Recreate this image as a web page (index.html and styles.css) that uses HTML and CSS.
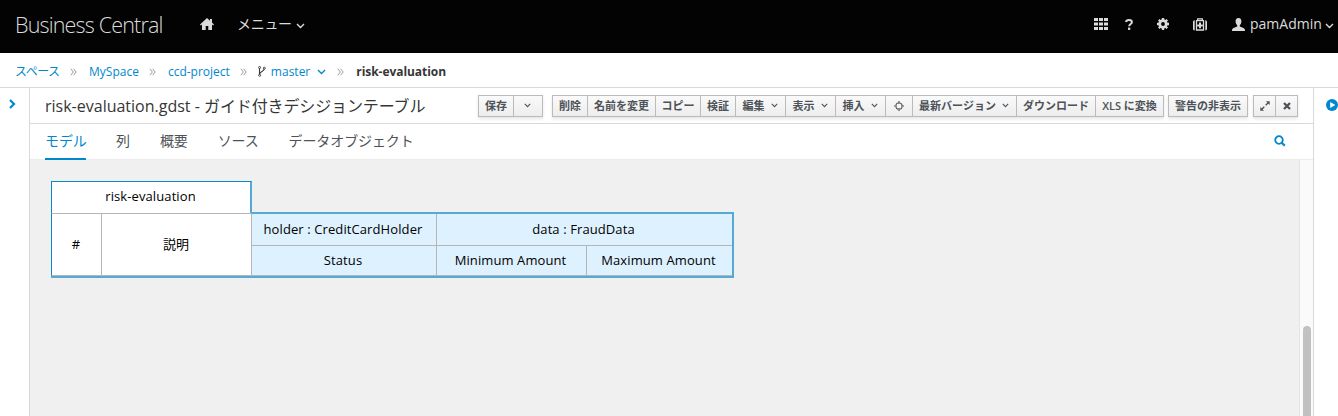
FILE: index.html
```html
<!DOCTYPE html>
<html lang="ja">
<head>
<meta charset="utf-8">
<title>Business Central</title>
<link rel="stylesheet" href="styles.css">
</head>
<body>
<svg class="defs" width="0" height="0">
  <symbol id="chev" viewBox="0 0 9 6"><path d="M1 1l3.500 3.500L8 1" fill="none" stroke="currentColor" stroke-width="1.400"/></symbol>
  <symbol id="sep" viewBox="0 0 7 8"><path d="M.8.8L3.400 4 .8 7.200M3.600.8L6.200 4 3.600 7.200" fill="none" stroke="currentColor" stroke-width=".9"/></symbol>
</svg>
<header class="navbar">
  <div class="brand">Business Central</div>
  <svg class="home" viewBox="0 0 14 12"><path d="M7 0L0 6.400l.9 1L2 6.500V12h3.700V8h2.600v4H12V6.500l1.100.9.900-1-2-1.800V1h-2v1.700z" fill="currentColor"/></svg>
  <div class="menu"><span>メニュー</span><svg class="nav-chev"><use href="#chev"/></svg></div>
  <div class="tools">
    <svg class="apps" viewBox="0 0 14 12"><path d="M0 0h4v3H0zM5 0h4v3H5zM10 0h4v3h-4zM0 4.500h4v3H0zM5 4.500h4v3H5zM10 4.500h4v3h-4zM0 9h4v3H0zM5 9h4v3H5zM10 9h4v3h-4z" fill="currentColor"/></svg>
    <svg class="help" viewBox="0 0 8 11"><path d="M1 3C1.200 1.700 2.300 1 4 1s2.900.8 2.900 2.200C6.900 5 4.200 5 4.200 7.200" fill="none" stroke="currentColor" stroke-width="2"/><path d="M3 8.600h2.300v2.300H3z" fill="currentColor"/></svg>
    <svg class="gear" viewBox="0 0 12 12"><circle cx="6" cy="6" r="3.300" fill="none" stroke="currentColor" stroke-width="2.800"/><path d="M6 0v2.500M6 9.500V12M0 6h2.500M9.500 6H12M1.800 1.800l1.700 1.700M8.500 8.500l1.700 1.700M10.200 1.800L8.500 3.500M3.500 8.500l-1.700 1.700" stroke="currentColor" stroke-width="2.300"/></svg>
    <svg class="kit" viewBox="0 0 14 13"><path d="M4.700 2.500V.8h4.600v1.700M3.500 2.700h7v9.300h-7z" fill="none" stroke="currentColor" stroke-width="1.300"/><path d="M1.700 2.300C.5 2.300 0 3 0 4v6.700c0 1 .5 1.700 1.700 1.700zM12.300 2.300C13.500 2.300 14 3 14 4v6.700c0 1-.5 1.700-1.700 1.700z" fill="currentColor"/><path d="M7 4.500v5.800M4.200 7.400h5.600" stroke="currentColor" stroke-width="2"/></svg>
    <svg class="user" viewBox="0 0 13 13"><path d="M6.500 0C4.500 0 3.500 1.400 3.600 3.500c.1 1.700.7 3 1.600 3.800v1.200L1.500 10C.4 10.500 0 11.300 0 13h13c0-1.700-.4-2.500-1.500-3L7.800 8.500V7.300c.9-.8 1.500-2.100 1.600-3.800C9.500 1.400 8.500 0 6.500 0z" fill="currentColor"/></svg>
    <span class="username">pamAdmin</span><svg class="nav-chev"><use href="#chev"/></svg>
  </div>
</header>
<nav class="crumbs">
  <a>スペース</a><svg class="sep"><use href="#sep"/></svg>
  <a>MySpace</a><svg class="sep"><use href="#sep"/></svg>
  <a>ccd-project</a><svg class="sep"><use href="#sep"/></svg>
  <svg class="branch" viewBox="0 0 8 11"><path d="M1.500 2v7M6.400 2.500C6.400 5.800 1.700 5 1.700 8" fill="none" stroke="#363636" stroke-width="1.100"/><g fill="#fff" stroke="#363636" stroke-width=".9"><circle cx="1.600" cy="1.500" r="1"/><circle cx="1.600" cy="9.300" r="1"/><circle cx="6.300" cy="2.200" r="1"/></g></svg>
  <a>master</a><svg class="crumb-chev"><use href="#chev"/></svg><svg class="sep"><use href="#sep"/></svg>
  <strong>risk-evaluation</strong>
</nav>
<div class="workbench">
  <aside class="west"><svg viewBox="0 0 7 10"><path d="M1 1l4 4-4 4" fill="none" stroke="currentColor" stroke-width="2.200"/></svg></aside>
  <main class="editor">
    <div class="titlebar">
      <h1><span class="file">risk-evaluation.gdst - </span><span class="kind">ガイド付きデシジョンテーブル</span></h1>
      <div class="group save"><button>保存</button><button><svg class="chev"><use href="#chev"/></svg></button></div>
      <div class="group actions">
        <button>削除</button><button>名前を変更</button><button>コピー</button><button>検証</button>
        <button>編集<svg class="chev"><use href="#chev"/></svg></button>
        <button>表示<svg class="chev"><use href="#chev"/></svg></button>
        <button>挿入<svg class="chev"><use href="#chev"/></svg></button>
        <button><svg class="target" viewBox="0 0 10 10"><circle cx="5" cy="5" r="3.300" fill="none" stroke="currentColor" stroke-width="1.100" stroke-dasharray="3.600 1.580" stroke-dashoffset="-.8"/><path d="M5 0v3M5 7v3M0 5h3M7 5h3" stroke="currentColor" stroke-width="1.200"/></svg></button>
        <button>最新バージョン<svg class="chev"><use href="#chev"/></svg></button>
        <button>ダウンロード</button><button>XLS に変換</button>
      </div>
      <div class="group alerts"><button>警告の非表示</button></div>
      <div class="group window">
        <button><svg class="expand" viewBox="0 0 10 10"><path d="M5.700 4.300L8.500 1.500M4.300 5.700L1.500 8.500" stroke="currentColor" stroke-width="1.400"/><path d="M6 .3h3.700V4zM.3 6v3.700H4z" fill="currentColor"/></svg></button>
        <button><svg class="close" viewBox="0 0 8 8"><path d="M1 1l6 6M7 1L1 7" stroke="currentColor" stroke-width="2.300"/></svg></button>
      </div>
    </div>
    <div class="tabs">
      <a class="active">モデル</a><a>列</a><a>概要</a><a>ソース</a><a>データオブジェクト</a>
      <svg class="search" viewBox="0 0 12 12"><circle cx="5" cy="5" r="3.800" fill="none" stroke="currentColor" stroke-width="1.800"/><path d="M7.800 7.800l3 3" stroke="currentColor" stroke-width="2.200"/></svg>
    </div>
    <div class="canvas">
      <div class="grid-area">
        <div class="caption">risk-evaluation</div>
        <div class="decision">
          <div class="plain">#</div>
          <div class="plain desc">説明</div>
          <div class="conditions">
            <div>holder : CreditCardHolder</div><div class="wide">data : FraudData</div>
            <div>Status</div><div>Minimum Amount</div><div>Maximum Amount</div>
          </div>
        </div>
      </div>
      <div class="track"><div class="thumb"></div></div>
    </div>
  </main>
  <aside class="east"><svg viewBox="0 0 12 12"><circle cx="6" cy="6" r="6" fill="currentColor"/><path d="M4.200 2.900v6.200L9.300 6z" fill="#fff"/></svg></aside>
</div>
</body>
</html>
```
FILE: styles.css
```css
* { box-sizing: border-box; }
body { margin: 0; width: 1338px; height: 416px; overflow: hidden; background: #fff; color: #363636; font-family: "Open Sans", "Noto Sans CJK JP", sans-serif; font-size: 12px; }
svg { display: block; flex: none; }
.defs { position: absolute; }

.navbar { display: flex; align-items: center; height: 53px; padding-left: 15px; padding-bottom: 5px; background: #030303; color: #dbdbdb; white-space: nowrap; }
.brand { width: 148px; font-size: 21.500px; font-weight: 300; letter-spacing: -.83px; padding-top: 1px; }
.home { width: 14px; height: 12px; margin-left: 37px; }
.menu { display: flex; align-items: center; gap: 4px; margin-left: 23px; font-size: 14px; }
.menu span { width: 55px; margin-top: -2px; letter-spacing: -.3px; }
.nav-chev { width: 9px; height: 6px; margin-top: 3px; }
.tools { display: flex; align-items: center; margin-left: auto; padding-right: 4px; }
.apps { width: 14px; height: 12px; }
.help { width: 8px; height: 11px; margin-left: 17px; }
.gear { width: 12px; height: 12px; margin-left: 24px; }
.kit { width: 14px; height: 13px; margin-left: 24px; }
.user { width: 13px; height: 13px; margin-left: 25px; }
.username { width: 72px; margin: -1px 0 0 5px; font-size: 14px; }
.tools .nav-chev { margin-left: 3px; }

.crumbs { display: flex; align-items: center; height: 35px; padding: 2px 0 0 15px; border-bottom: 1px solid #d9d9d9; white-space: nowrap; }
.crumbs a { color: #0088ce; }
.crumbs a:first-child { width: 45px; letter-spacing: -.5px; }
.sep { width: 7px; height: 8px; margin: 2px 12px 0 10px; color: #8b8d8f; }
.branch { width: 8px; height: 11px; margin: 0 5px 0 -1px; }
.crumb-chev { width: 9px; height: 6px; margin: 1px 1px 0 7px; color: #0088ce; }
.crumbs strong { font-weight: 700; letter-spacing: -.05px; }

.workbench { display: grid; grid-template-columns: 29px 1285px 24px; height: 328px; }
.west, .east { color: #0088ce; }
.west { padding: 11px 0 0 9px; }
.west svg { width: 7px; height: 10px; }
.east { padding: 11px 0 0 12px; overflow: hidden; }
.east svg { width: 12px; height: 12px; }
.editor { display: flex; flex-direction: column; border: solid #d9d9d9; border-width: 0 1px; }

.titlebar { display: flex; align-items: flex-start; height: 36px; padding: 7px 0 0 15px; border-bottom: 1px solid #d9d9d9; white-space: nowrap; }
h1 { display: flex; width: 433px; margin: -1px 0 0; font-size: 16px; font-weight: 400; line-height: 24px; }
.file { width: 159px; white-space: pre; }
.kind { letter-spacing: -.12px; }
.group { display: grid; height: 22px; border: 1px solid #bbb; box-shadow: 0 2px 3px rgba(3,3,3,.1); }
.save { grid-template-columns: 35px 28px; }
.actions { grid-template-columns: 35px 68px 45px 35px 50px 50px 50px 27px 104px 79px 67px; margin-left: 9px; }
.alerts { grid-template-columns: 78px; margin-left: 4px; }
.window { grid-template-columns: 22px 21px; margin-left: 5px; }
button { display: flex; align-items: center; justify-content: center; min-width: 0; margin: 0; padding: 0; border: 0; border-right: 1px solid #bbb; background: linear-gradient(#fafafa, #ededed); color: #4d5258; font: 600 11px/20px "Open Sans", "Noto Sans CJK JP", sans-serif; }
button:last-child { border-right: 0; }
.chev { width: 7px; height: 5px; margin: -2px 1px 0 6px; }
.chev { stroke-width: 1px; }
.save .chev { margin-left: 0; }
.target { width: 10px; height: 10px; }
.expand { width: 10px; height: 10px; }
.close { width: 8px; height: 8px; }

.tabs { display: flex; height: 36px; padding: 0 27px 0 15px; color: #4d5258; font-size: 14px; line-height: 34px; white-space: nowrap; }
.tabs a { height: 36px; margin-right: 30px; letter-spacing: -.12px; }
.tabs .active { position: relative; width: 41px; border-bottom: 2px solid #0088ce; color: #0088ce; }
.search { width: 12px; height: 12px; margin: 11px 0 0 auto; color: #0088ce; }

.canvas { display: flex; flex: 1; background: #f0f0f0; border-top: 1px solid #ededed; margin-top: -1px; }
.grid-area { flex: 1; padding: 21px 0 0 21px; color: #000; font-size: 13px; letter-spacing: .1px; }
.caption { width: 201px; height: 32px; padding-right: 1px; border: 1px solid #0a87c4; border-right: 2px solid #55a9d5; border-bottom: 0; background: #fff; line-height: 28px; text-align: center; }
.decision { display: grid; grid-template-columns: 50px 150px 483px; grid-template-rows: 63px; width: 683px; height: 65px; border-bottom: 2px solid #55a9d5; }
.plain { display: flex; align-items: center; justify-content: center; padding: 0 1px 2px 0; border: solid #b5b5b5; border-width: 1px 0 1px 1px; background: #fff; }
.plain:first-child { border-left-color: #0a87c4; }
.conditions { display: grid; grid-template-columns: 185px 150px 145px; grid-template-rows: 32px 30px; height: 64px; margin-top: -1px; border: solid #55a9d5; border-width: 2px 2px 0 1px; border-left-color: #b5b5b5; background: #def1ff; }
.conditions div { display: flex; align-items: center; justify-content: center; padding: 0 2px 2px 0; border: solid #b5b5b5; border-width: 0 1px 1px 0; }
.conditions .wide { grid-column: span 2; }
.conditions .wide, .conditions div:last-child { border-right: 0; }
.track { width: 14px; padding: 166px 2px 0 3px; border-left: 1px solid #e5e5e5; background: #fafafa; }
.thumb { width: 8px; height: 100px; border-radius: 4px; background: #c1c1c1; }
```
